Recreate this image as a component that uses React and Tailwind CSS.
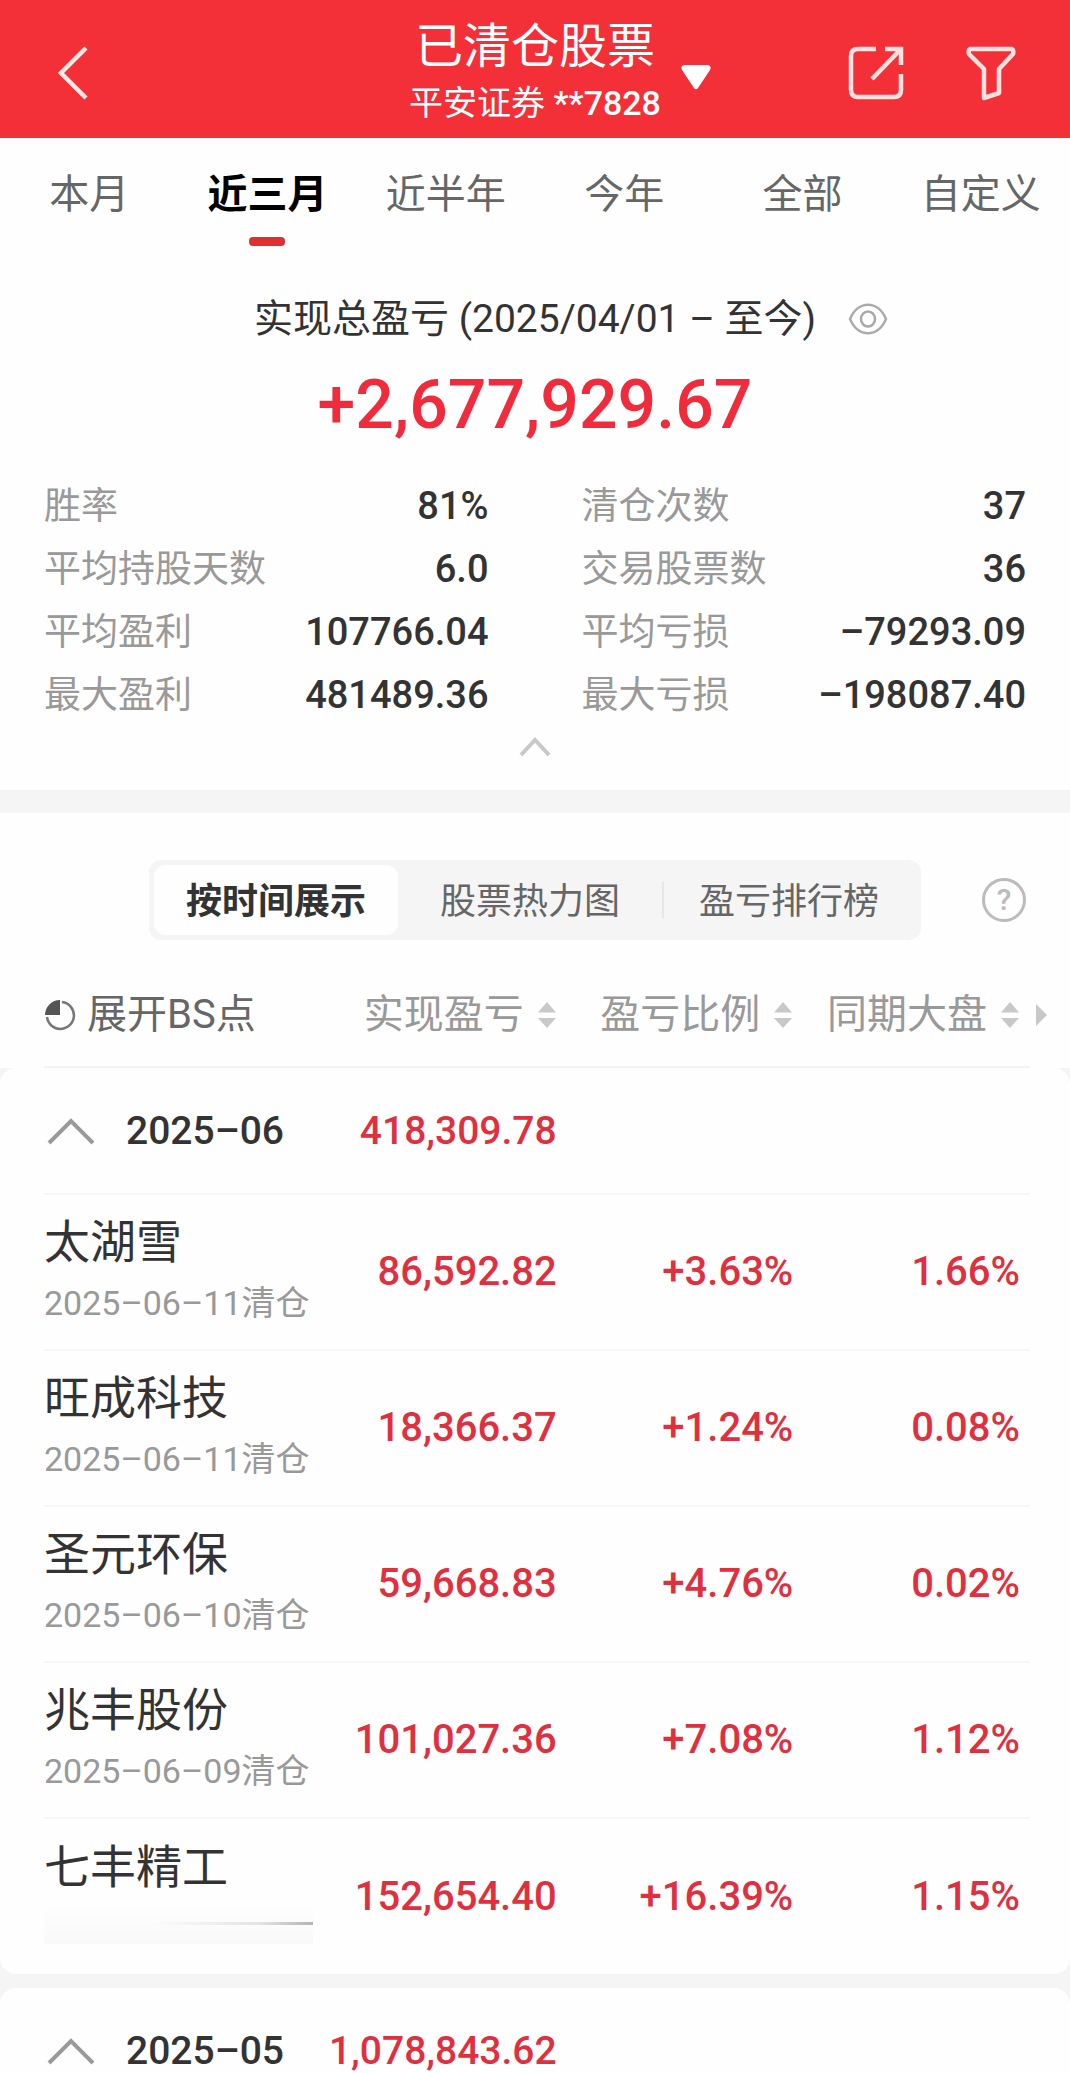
import React, { useState } from "react";

const periods = ["本月", "近三月", "近半年", "今年", "全部", "自定义"];

const stats = [
  { label: "胜率", value: "81%" },
  { label: "清仓次数", value: "37" },
  { label: "平均持股天数", value: "6.0" },
  { label: "交易股票数", value: "36" },
  { label: "平均盈利", value: "107766.04" },
  { label: "平均亏损", value: "–79293.09" },
  { label: "最大盈利", value: "481489.36" },
  { label: "最大亏损", value: "–198087.40" }
];

const views = [
  { label: "按时间展示", width: "w-[244px]" },
  { label: "股票热力图", width: "w-[264px]" },
  { label: "盈亏排行榜", width: "w-[254px]" }
];

const months = [
  {
    month: "2025–06",
    total: "418,309.78",
    rows: [
      { name: "太湖雪", date: "2025–06–11清仓", profit: "86,592.82", ratio: "+3.63%", market: "1.66%" },
      { name: "旺成科技", date: "2025–06–11清仓", profit: "18,366.37", ratio: "+1.24%", market: "0.08%" },
      { name: "圣元环保", date: "2025–06–10清仓", profit: "59,668.83", ratio: "+4.76%", market: "0.02%" },
      { name: "兆丰股份", date: "2025–06–09清仓", profit: "101,027.36", ratio: "+7.08%", market: "1.12%" },
      { name: "七丰精工", date: "", profit: "152,654.40", ratio: "+16.39%", market: "1.15%" }
    ]
  },
  { month: "2025–05", total: "1,078,843.62", rows: [] }
];

function SortArrows() {
  return (
    <svg width="20" height="28" viewBox="0 0 20 28" fill="#c8c8c8" className="shrink-0">
      <path d="M10 1 L19 11.5 H1 Z" />
      <path d="M10 27 L1 17 H19 Z" />
    </svg>
  );
}

function SortButton({ children }) {
  return (
    <button className="flex items-center gap-[13px] whitespace-nowrap text-[#999]">
      {children}
      <SortArrows />
    </button>
  );
}

function MonthCard({ data }) {
  return (
    <section className="bg-[#fefefe] rounded-2xl pl-11 pr-10">
      <table className="w-full table-fixed border-collapse">
        <colgroup>
          <col className="w-[28%]" />
          <col className="w-[24%]" />
          <col className="w-[24%]" />
          <col className="w-[24%]" />
        </colgroup>
        <tbody className="text-right text-[40px] leading-[48px] font-medium text-[#e0303f]">
          <tr className="h-[126px] text-[39px]">
            <th scope="rowgroup" className="text-left font-medium text-[#333]">
              <button className="flex items-center gap-8">
                <svg width="50" height="28" viewBox="0 0 50 28" fill="none" stroke="#999" strokeWidth="4">
                  <path d="M5 26 L27 4 L49 26" />
                </svg>
                {data.month}
              </button>
            </th>
            <td>{data.total}</td>
            <td></td>
            <td></td>
          </tr>
          {data.rows.map((row) => (
            <tr key={row.name} className="h-[156px] border-t-2 border-[#f6f6f6]">
              <th scope="row" className="text-left font-normal whitespace-nowrap">
                <div className="text-[46px] leading-[62px] text-[#333]">{row.name}</div>
                {row.date ? (
                  <div className="text-[34px] leading-[60px] text-[#999]">{row.date}</div>
                ) : (
                  <div className="h-[60px] pt-[6px]">
                    {/* hidden closing date */}
                    <div className="w-[269px] h-10 flex flex-col justify-center bg-linear-to-b from-transparent to-[#f9f9f9]">
                      <div className="h-[3px] bg-linear-to-r from-transparent from-40% via-[#e4e4e4] via-80% to-[#b4b4b4]"></div>
                    </div>
                  </div>
                )}
              </th>
              <td>{row.profit}</td>
              <td>{row.ratio}</td>
              <td className="pr-[10px]">{row.market}</td>
            </tr>
          ))}
        </tbody>
      </table>
    </section>
  );
}

function App() {
  const [period, setPeriod] = useState("近三月");
  const [view, setView] = useState("按时间展示");

  return (
    <div className="h-screen overflow-hidden bg-[#f5f5f5] text-[#333] font-[Roboto,'Noto_Sans_CJK_SC',sans-serif]">
      {/* Top bar */}
      <header className="grid grid-cols-[1fr_auto_1fr] items-center h-[138px] pt-2 bg-[#f32f38] text-white">
        <button aria-label="返回" className="ml-[56px] w-9 h-14">
          <svg width="36" height="56" viewBox="0 0 36 56" fill="none" stroke="#ffe9e6" strokeWidth="4.5">
            <path d="M30 3 L5 28 L30 53" />
          </svg>
        </button>
        <button className="relative text-center">
          <span className="block text-[48px] leading-[60px]">已清仓股票</span>
          <span className="block text-[34px] leading-[52px] whitespace-nowrap">
            平安证券 <span className="font-medium">**7828</span>
          </span>
          <svg width="30" height="25" viewBox="0 0 30 25" fill="#fff" className="absolute left-full top-[48px] ml-5">
            <path d="M3 0 H27 Q31 1 29 5 L17 23 Q15 25.500 13 23 L1 5 Q-1 1 3 0 Z" />
          </svg>
        </button>
        <div className="flex items-center justify-end gap-[62px] pr-[54px]">
          <button aria-label="分享">
            <svg width="56" height="56" viewBox="0 0 56 56" fill="none" stroke="#ffe2df" strokeWidth="4.500">
              <path d="M28 4 H10 Q3 4 3 11 V45 Q3 52 10 52 H46 Q53 52 53 45 V29" />
              <path d="M37 4 H53 V20" />
              <path d="M52 5 L24 34" />
            </svg>
          </button>
          <button aria-label="筛选">
            <svg width="50" height="56" viewBox="0 0 50 56" fill="none" stroke="#ffe2df" strokeWidth="4.500" strokeLinejoin="round">
              <path d="M4 4 H46 Q48 5 47 9 L33 24 V48 L18 53 V24 L3 9 Q2 5 4 4 Z" />
            </svg>
          </button>
        </div>
      </header>

      {/* Period tabs and summary */}
      <section className="bg-[#fefefe] h-[652px]">
        <nav className="grid grid-cols-6 pt-[27px] text-[40px] leading-[60px] text-[#666]">
          {periods.map((p) => (
            <button key={p} onClick={() => setPeriod(p)} className="flex flex-col items-center gap-3">
              <span className={p === period ? "font-bold text-black" : ""}>{p}</span>
              {p === period && <span className="w-9 h-[9px] rounded-[4px] bg-[#df3031]"></span>}
            </button>
          ))}
        </nav>

        <div className="grid grid-cols-[1fr_auto_1fr] items-center mt-[47px] text-[39px] leading-[52px]">
          <span></span>
          <h2>实现总盈亏 (2025/04/01 – 至今)</h2>
          <button aria-label="隐藏金额" className="ml-8 w-10">
            <svg width="40" height="32" viewBox="0 0 40 32" fill="none" stroke="#aaa" strokeWidth="2.500">
              <path d="M2 16 C10 -3 30 -3 38 16 C30 35 10 35 2 16 Z" />
              <ellipse cx="20" cy="16" rx="7" ry="7.500" />
            </svg>
          </button>
        </div>
        <div className="mt-5 text-center text-[68px] leading-[80px] font-medium text-[#f02c3c]">+2,677,929.67</div>

        <dl className="grid grid-cols-2 gap-x-[93px] mt-[30px] px-11 leading-[63px]">
          {stats.map((s) => (
            <div key={s.label} className="flex justify-between h-[63px]">
              <dt className="text-[37px] text-[#999]">{s.label}</dt>
              <dd className="text-[38px] font-medium">{s.value}</dd>
            </div>
          ))}
        </dl>
        <button aria-label="收起" className="block mx-auto mt-2">
          <svg width="34" height="22" viewBox="0 0 34 22" fill="none" stroke="#c8c8c8" strokeWidth="4">
            <path d="M3 20 L17 5 L31 20" />
          </svg>
        </button>
      </section>

      {/* View switch and column titles */}
      <section className="mt-[23px] bg-[#fefefe] pt-[47px]">
        <div className="grid grid-cols-[1fr_auto_1fr] items-center">
          <span></span>
          <div className="flex items-center h-20 p-[5px] rounded-xl bg-[#f5f5f5] text-[36px] leading-[52px] text-[#666]">
            {views.map((v, i) => (
              <React.Fragment key={v.label}>
                {i === 2 && <span className="w-[2px] h-9 -mr-[2px] bg-[#e6e6e6]"></span>}
                <button
                  onClick={() => setView(v.label)}
                  className={`h-[70px] pt-[3px] rounded-xl ${v.width} ${view === v.label ? "bg-[#fefefe] font-bold text-[#333]" : ""}`}
                >
                  {v.label}
                </button>
              </React.Fragment>
            ))}
          </div>
          <button aria-label="帮助" className="flex justify-center items-center justify-self-end mr-11 w-11 h-11 rounded-full border-3 border-[#bbb] text-[30px] leading-none text-[#bbb] font-medium">
            ?
          </button>
        </div>

        <div className="ml-11 mr-10 mt-[23px] h-[105px] grid grid-cols-[28%_24%_24%_24%] items-center text-[40px] leading-[60px] border-b-2 border-[#f3f3f3]">
          <button className="flex items-center gap-[11px] text-[#666] whitespace-nowrap">
            <svg width="32" height="32" viewBox="0 0 32 32" className="shrink-0">
              <path d="M18 3 A13.500 13.500 0 1 1 3 18" fill="none" stroke="#777" strokeWidth="2.500" />
              <path d="M16 1 V16 H1 A15 15 0 0 1 16 1 Z" fill="#555" />
            </svg>
            展开BS点
          </button>
          <div className="flex justify-end">
            <SortButton>实现盈亏</SortButton>
          </div>
          <div className="flex justify-end">
            <SortButton>盈亏比例</SortButton>
          </div>
          <div className="flex justify-end items-center gap-4 -mr-[17px]">
            <SortButton>同期大盘</SortButton>
            <button aria-label="更多列">
              <svg width="11" height="22" viewBox="0 0 11 22" fill="#c8c8c8">
                <path d="M0 0 L11 11 L0 22 Z" />
              </svg>
            </button>
          </div>
        </div>
      </section>

      <main className="flex flex-col gap-[14px]">
        {months.map((m) => (
          <MonthCard key={m.month} data={m} />
        ))}
      </main>
    </div>
  );
}

export default App;
